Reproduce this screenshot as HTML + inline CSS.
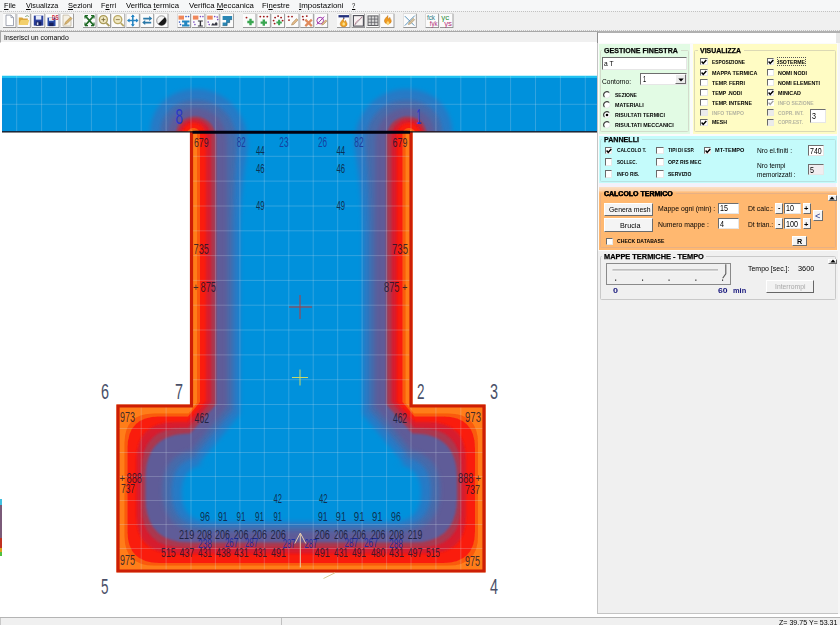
<!DOCTYPE html>
<html lang="it"><head><meta charset="utf-8"><title>Verifica termica</title>
<style>
html,body{margin:0;padding:0;}
body{width:840px;height:625px;overflow:hidden;background:#fff;position:relative;font-family:"Liberation Sans",sans-serif;}
.t{position:absolute;white-space:nowrap;transform-origin:0 50%;display:block;}
.b{position:absolute;box-sizing:border-box;}
svg{position:absolute;left:0;top:0;}
u{text-decoration:underline;}
</style></head><body>
<svg width="840" height="625" viewBox="0 0 840 625">
<defs>
<clipPath id="shp"><path d="M2,76 H597 V131.5 H412.5 V404.5 H485.5 V572.5 H116.5 V404.5 H190 V131.5 H2 Z"/></clipPath>
<filter id="bl0" x="-5%" y="-5%" width="110%" height="110%"><feGaussianBlur stdDeviation="0.7"/></filter>
<filter id="bl1" x="-5%" y="-5%" width="110%" height="110%"><feGaussianBlur stdDeviation="1.3"/></filter>
<filter id="bl2" x="-5%" y="-5%" width="110%" height="110%"><feGaussianBlur stdDeviation="2"/></filter>
</defs>
<g clip-path="url(#shp)">
<rect x="0" y="76" width="597" height="496.5" fill="#ff7d19"/>
<path d="M0,73 L0,134.5 L189.0,134.5 C189.0,128.6 197.0,128.6 197.0,133.6 L197.0,402.7 L188.6,413.5 L154.1,413.5 Q124.5,413.5 124.5,443.1 L124.5,535.9 Q124.5,565.5 154.1,565.5 L448.4,565.5 Q478.0,565.5 478.0,535.9 L478.0,443.1 Q478.0,413.5 448.4,413.5 L413.9,413.5 L405.5,402.7 L405.5,133.6 C405.5,128.6 413.5,128.6 413.5,134.5 L413.5,134.5 L600,134.5 L600,73 Z" fill="#fa5a0a" filter="url(#bl0)"/>
<path d="M0,73 L0,134.5 L187.0,134.5 C187.0,125.7 200.0,125.7 200.0,134.5 L200.0,402.1 L188.0,416.5 L159.2,416.5 Q127.5,416.5 127.5,448.2 L127.5,531.3 Q127.5,563.0 159.2,563.0 L443.3,563.0 Q475.0,563.0 475.0,531.3 L475.0,448.2 Q475.0,416.5 443.3,416.5 L414.5,416.5 L402.5,402.1 L402.5,134.5 C402.5,125.7 415.5,125.7 415.5,134.5 L415.5,134.5 L600,134.5 L600,73 Z" fill="#fa1e10" filter="url(#bl0)"/>
<path d="M0,73 L0,134.5 L182.0,134.5 C182.0,118.5 206.0,118.5 206.0,136.3 L206.0,401.9 L187.6,422.0 L174.5,422.0 Q136.5,422.0 136.5,460.0 L136.5,515.5 Q136.5,553.5 174.5,553.5 L428.0,553.5 Q466.0,553.5 466.0,515.5 L466.0,460.0 Q466.0,422.0 428.0,422.0 L414.9,422.0 L396.5,401.9 L396.5,136.3 C396.5,118.5 420.5,118.5 420.5,134.5 L420.5,134.5 L600,134.5 L600,73 Z" fill="#d71c2d" filter="url(#bl1)"/>
<path d="M0,73 L0,134.5 L179.0,134.5 C179.0,114.1 211.0,114.1 211.0,137.8 L211.0,402.1 L187.9,428.0 L183.0,428.0 Q141.5,428.0 141.5,469.5 L141.5,506.0 Q141.5,547.5 183.0,547.5 L419.5,547.5 Q461.0,547.5 461.0,506.0 L461.0,469.5 Q461.0,428.0 419.5,428.0 L414.6,428.0 L391.5,402.1 L391.5,137.8 C391.5,114.1 423.5,114.1 423.5,134.5 L423.5,134.5 L600,134.5 L600,73 Z" fill="#aa3750" filter="url(#bl1)"/>
<path d="M0,73 L0,134.5 L176.0,134.5 C176.0,109.8 216.0,109.8 216.0,139.3 L216.0,404.5 L190.0,433.5 L189.8,433.5 Q145.5,433.5 145.5,477.8 L145.5,498.2 Q145.5,542.5 189.8,542.5 L412.7,542.5 Q457.0,542.5 457.0,498.2 L457.0,477.8 Q457.0,433.5 412.7,433.5 L412.5,433.5 L386.5,404.5 L386.5,139.3 C386.5,109.8 426.5,109.8 426.5,134.5 L426.5,134.5 L600,134.5 L600,73 Z" fill="#5f5c98" filter="url(#bl1)"/>
<path d="M0,73 L0,134.5 L168.0,134.5 C168.0,98.2 227.0,98.2 227.0,142.6 L227.0,406.8 L191.8,449.5 L203.0,449.5 Q162.5,449.5 162.5,490.0 L162.5,491.0 Q162.5,531.5 203.0,531.5 L399.5,531.5 Q440.0,531.5 440.0,491.0 L440.0,490.0 Q440.0,449.5 399.5,449.5 L410.6,449.5 L375.5,406.8 L375.5,142.6 C375.5,98.2 434.5,98.2 434.5,134.5 L434.5,134.5 L600,134.5 L600,73 Z" fill="#466aaa" filter="url(#bl2)"/>
<path d="M0,73 L0,134.5 L160.0,134.5 C160.0,86.6 237.0,86.6 237.0,144.4 C235.0,171.5 233.0,201.5 233.0,236.5 L233.0,409.7 L194.3,456.5 L206.0,456.5 Q171.5,456.5 171.5,491.0 L171.5,492.0 Q171.5,526.5 206.0,526.5 L396.5,526.5 Q431.0,526.5 431.0,492.0 L431.0,491.0 Q431.0,456.5 396.5,456.5 L408.2,456.5 L369.5,409.7 L369.5,236.5 C369.5,201.5 367.5,171.5 365.5,144.4 C365.5,86.6 442.5,86.6 442.5,134.5 L442.5,134.5 L600,134.5 L600,73 Z" fill="#287ac6" filter="url(#bl2)"/>
<path d="M0,73 L0,134.5 L150.0,134.5 C150.0,72.1 248.0,72.1 248.0,146.5 C244.0,171.5 240.0,201.5 240.0,236.5 L240.0,414.1 L198.0,464.5 L209.5,464.5 Q181.5,464.5 181.5,492.5 L181.5,493.5 Q181.5,521.5 209.5,521.5 L393.0,521.5 Q421.0,521.5 421.0,493.5 L421.0,492.5 Q421.0,464.5 393.0,464.5 L404.5,464.5 L362.5,414.1 L362.5,236.5 C362.5,201.5 358.5,171.5 354.5,146.5 C354.5,72.1 452.5,72.1 452.5,134.5 L452.5,134.5 L600,134.5 L600,73 Z" fill="#0391dc" filter="url(#bl2)"/>
<rect x="0" y="76" width="597" height="2" fill="#25c6f2" opacity="0.9"/>
<path d="M16.7,76 V131.5 M41.6,76 V131.5 M66.5,76 V131.5 M91.4,76 V131.5 M116.3,76 V131.5 M116.3,404.5 V572.5 M141.2,76 V131.5 M141.2,404.5 V572.5 M166.1,76 V131.5 M166.1,404.5 V572.5 M191.0,76 V572.5 M215.4,76 V572.5 M239.9,76 V572.5 M264.3,76 V572.5 M288.8,76 V572.5 M313.2,76 V572.5 M337.7,76 V572.5 M362.1,76 V572.5 M386.6,76 V572.5 M411.0,76 V572.5 M435.9,76 V131.5 M435.9,404.5 V572.5 M460.8,76 V131.5 M460.8,404.5 V572.5 M485.7,76 V131.5 M485.7,404.5 V572.5 M510.6,76 V131.5 M535.5,76 V131.5 M560.4,76 V131.5 M585.3,76 V131.5 M0,104.3 H597 M190,156.3 H412.5 M190,181.1 H412.5 M190,206.0 H412.5 M190,230.8 H412.5 M190,255.6 H412.5 M190,280.4 H412.5 M190,305.2 H412.5 M190,330.0 H412.5 M190,354.9 H412.5 M190,379.7 H412.5 M116.5,404.5 H485.5 M116.5,428.5 H485.5 M116.5,452.5 H485.5 M116.5,476.5 H485.5 M116.5,500.5 H485.5 M116.5,524.5 H485.5 M116.5,548.5 H485.5" stroke="#d4e2ee" stroke-opacity="0.24" stroke-width="1" fill="none"/>
</g>
<rect x="2" y="75" width="595" height="1" fill="#c4f1fb"/>
<path d="M191.5,131.5 V406 H118 V571 H484 V406 H411 V131.5" fill="none" stroke="#cd1e05" stroke-width="3.2" stroke-linejoin="miter"/>
<path d="M2,131.8 H597" stroke="#101018" stroke-width="1.2"/>
<path d="M192.5,132.3 H410" stroke="#000010" stroke-width="3"/>
<path d="M289,307 H312 M300,295 V319" stroke="#b43a3a" stroke-width="1" fill="none"/>
<path d="M292,377.5 H308 M300,369.5 V385.5" stroke="#c8d868" stroke-width="1" fill="none"/>
<path d="M300.3,567.5 V534 M294.8,543.5 L300.3,533 L305.8,543.5" stroke="#e6cdb0" stroke-width="1" fill="none"/>
<path d="M323.5,578.5 L335,572.8" stroke="#d8cc98" stroke-width="1" fill="none"/>
<rect x="0" y="499" width="2" height="57" fill="#7a5a78"/>
<rect x="0" y="499" width="2" height="6" fill="#40c0e0"/><rect x="0" y="538" width="2" height="10" fill="#c03020"/><rect x="0" y="548" width="2" height="4" fill="#e0a020"/><rect x="0" y="552" width="2" height="4" fill="#50c040"/>
<g font-family="Liberation Sans, sans-serif">
<text x="194.0" y="147.3" font-size="13.3" textLength="14.6" lengthAdjust="spacingAndGlyphs" fill="#10142c" fill-opacity="0.8">679</text>
<text x="392.6" y="147.3" font-size="13.3" textLength="14.8" lengthAdjust="spacingAndGlyphs" fill="#10142c" fill-opacity="0.8">679</text>
<text x="236.8" y="147.0" font-size="14.0" textLength="8.9" lengthAdjust="spacingAndGlyphs" fill="#1a2a90" fill-opacity="0.8">82</text>
<text x="279.3" y="147.0" font-size="14.0" textLength="9.3" lengthAdjust="spacingAndGlyphs" fill="#1a2a90" fill-opacity="0.8">23</text>
<text x="317.9" y="147.0" font-size="14.0" textLength="9.1" lengthAdjust="spacingAndGlyphs" fill="#1a2a90" fill-opacity="0.8">26</text>
<text x="354.3" y="147.0" font-size="14.0" textLength="9.3" lengthAdjust="spacingAndGlyphs" fill="#1a2a90" fill-opacity="0.8">82</text>
<text x="256.0" y="154.5" font-size="12.6" textLength="8.6" lengthAdjust="spacingAndGlyphs" fill="#10142c" fill-opacity="0.8">44</text>
<text x="336.4" y="154.5" font-size="12.6" textLength="8.6" lengthAdjust="spacingAndGlyphs" fill="#10142c" fill-opacity="0.8">44</text>
<text x="256.0" y="172.5" font-size="12.6" textLength="8.6" lengthAdjust="spacingAndGlyphs" fill="#10142c" fill-opacity="0.8">46</text>
<text x="336.4" y="172.5" font-size="12.6" textLength="8.6" lengthAdjust="spacingAndGlyphs" fill="#10142c" fill-opacity="0.8">46</text>
<text x="256.0" y="209.5" font-size="12.6" textLength="8.6" lengthAdjust="spacingAndGlyphs" fill="#10142c" fill-opacity="0.8">49</text>
<text x="336.4" y="209.5" font-size="12.6" textLength="8.6" lengthAdjust="spacingAndGlyphs" fill="#10142c" fill-opacity="0.8">49</text>
<text x="193.6" y="254.0" font-size="14.0" textLength="15.4" lengthAdjust="spacingAndGlyphs" fill="#10142c" fill-opacity="0.8">735</text>
<text x="392.0" y="254.0" font-size="14.0" textLength="16.0" lengthAdjust="spacingAndGlyphs" fill="#10142c" fill-opacity="0.8">735</text>
<text x="193.0" y="290.6" font-size="11.2" textLength="5.5" lengthAdjust="spacingAndGlyphs" fill="#10142c" fill-opacity="0.8">+</text>
<text x="200.5" y="291.6" font-size="14.0" textLength="15.5" lengthAdjust="spacingAndGlyphs" fill="#10142c" fill-opacity="0.8">875</text>
<text x="384.0" y="291.6" font-size="14.0" textLength="15.5" lengthAdjust="spacingAndGlyphs" fill="#10142c" fill-opacity="0.8">875</text>
<text x="402.0" y="290.6" font-size="11.2" textLength="5.5" lengthAdjust="spacingAndGlyphs" fill="#10142c" fill-opacity="0.8">+</text>
<text x="194.6" y="422.5" font-size="14.0" textLength="14.4" lengthAdjust="spacingAndGlyphs" fill="#10142c" fill-opacity="0.8">462</text>
<text x="393.0" y="422.5" font-size="14.0" textLength="14.0" lengthAdjust="spacingAndGlyphs" fill="#10142c" fill-opacity="0.8">462</text>
<text x="120.0" y="422.0" font-size="14.0" textLength="15.0" lengthAdjust="spacingAndGlyphs" fill="#10142c" fill-opacity="0.8">973</text>
<text x="465.0" y="422.0" font-size="14.0" textLength="16.0" lengthAdjust="spacingAndGlyphs" fill="#10142c" fill-opacity="0.8">973</text>
<text x="119.5" y="482.0" font-size="11.2" textLength="5.5" lengthAdjust="spacingAndGlyphs" fill="#10142c" fill-opacity="0.8">+</text>
<text x="126.5" y="483.0" font-size="14.0" textLength="15.5" lengthAdjust="spacingAndGlyphs" fill="#10142c" fill-opacity="0.8">888</text>
<text x="458.0" y="483.0" font-size="14.0" textLength="15.5" lengthAdjust="spacingAndGlyphs" fill="#10142c" fill-opacity="0.8">888</text>
<text x="475.5" y="482.0" font-size="11.2" textLength="5.5" lengthAdjust="spacingAndGlyphs" fill="#10142c" fill-opacity="0.8">+</text>
<text x="121.0" y="492.5" font-size="12.6" textLength="14.0" lengthAdjust="spacingAndGlyphs" fill="#10142c" fill-opacity="0.8">737</text>
<text x="465.0" y="493.5" font-size="12.6" textLength="15.0" lengthAdjust="spacingAndGlyphs" fill="#10142c" fill-opacity="0.8">737</text>
<text x="273.6" y="502.5" font-size="12.6" textLength="8.4" lengthAdjust="spacingAndGlyphs" fill="#10142c" fill-opacity="0.8">42</text>
<text x="319.0" y="502.5" font-size="12.6" textLength="8.7" lengthAdjust="spacingAndGlyphs" fill="#10142c" fill-opacity="0.8">42</text>
<text x="200.0" y="520.5" font-size="12.6" textLength="10.0" lengthAdjust="spacingAndGlyphs" fill="#10142c" fill-opacity="0.8">96</text>
<text x="218.0" y="520.5" font-size="12.6" textLength="9.7" lengthAdjust="spacingAndGlyphs" fill="#10142c" fill-opacity="0.8">91</text>
<text x="236.6" y="520.5" font-size="12.6" textLength="8.9" lengthAdjust="spacingAndGlyphs" fill="#10142c" fill-opacity="0.8">91</text>
<text x="255.0" y="520.5" font-size="12.6" textLength="9.0" lengthAdjust="spacingAndGlyphs" fill="#10142c" fill-opacity="0.8">91</text>
<text x="273.6" y="520.5" font-size="12.6" textLength="8.4" lengthAdjust="spacingAndGlyphs" fill="#10142c" fill-opacity="0.8">91</text>
<text x="318.0" y="520.5" font-size="12.6" textLength="9.7" lengthAdjust="spacingAndGlyphs" fill="#10142c" fill-opacity="0.8">91</text>
<text x="335.8" y="520.5" font-size="12.6" textLength="10.2" lengthAdjust="spacingAndGlyphs" fill="#10142c" fill-opacity="0.8">91</text>
<text x="353.8" y="520.5" font-size="12.6" textLength="10.8" lengthAdjust="spacingAndGlyphs" fill="#10142c" fill-opacity="0.8">91</text>
<text x="372.0" y="520.5" font-size="12.6" textLength="10.7" lengthAdjust="spacingAndGlyphs" fill="#10142c" fill-opacity="0.8">91</text>
<text x="391.0" y="520.5" font-size="12.6" textLength="9.8" lengthAdjust="spacingAndGlyphs" fill="#10142c" fill-opacity="0.8">96</text>
<text x="179.0" y="538.5" font-size="12.6" textLength="15.3" lengthAdjust="spacingAndGlyphs" fill="#10142c" fill-opacity="0.8">219</text>
<text x="197.0" y="538.5" font-size="12.6" textLength="15.0" lengthAdjust="spacingAndGlyphs" fill="#10142c" fill-opacity="0.8">208</text>
<text x="215.0" y="538.5" font-size="12.6" textLength="15.0" lengthAdjust="spacingAndGlyphs" fill="#10142c" fill-opacity="0.8">206</text>
<text x="233.7" y="538.5" font-size="12.6" textLength="14.8" lengthAdjust="spacingAndGlyphs" fill="#10142c" fill-opacity="0.8">206</text>
<text x="252.0" y="538.5" font-size="12.6" textLength="15.0" lengthAdjust="spacingAndGlyphs" fill="#10142c" fill-opacity="0.8">206</text>
<text x="270.6" y="538.5" font-size="12.6" textLength="15.4" lengthAdjust="spacingAndGlyphs" fill="#10142c" fill-opacity="0.8">206</text>
<text x="314.6" y="538.5" font-size="12.6" textLength="15.4" lengthAdjust="spacingAndGlyphs" fill="#10142c" fill-opacity="0.8">206</text>
<text x="334.0" y="538.5" font-size="12.6" textLength="14.0" lengthAdjust="spacingAndGlyphs" fill="#10142c" fill-opacity="0.8">206</text>
<text x="352.0" y="538.5" font-size="12.6" textLength="14.0" lengthAdjust="spacingAndGlyphs" fill="#10142c" fill-opacity="0.8">206</text>
<text x="371.0" y="538.5" font-size="12.6" textLength="14.4" lengthAdjust="spacingAndGlyphs" fill="#10142c" fill-opacity="0.8">206</text>
<text x="389.0" y="538.5" font-size="12.6" textLength="15.0" lengthAdjust="spacingAndGlyphs" fill="#10142c" fill-opacity="0.8">208</text>
<text x="407.7" y="538.5" font-size="12.6" textLength="14.6" lengthAdjust="spacingAndGlyphs" fill="#10142c" fill-opacity="0.8">219</text>
<text x="161.0" y="557.0" font-size="12.6" textLength="14.7" lengthAdjust="spacingAndGlyphs" fill="#10142c" fill-opacity="0.8">515</text>
<text x="179.5" y="557.0" font-size="12.6" textLength="14.8" lengthAdjust="spacingAndGlyphs" fill="#10142c" fill-opacity="0.8">437</text>
<text x="198.0" y="557.0" font-size="12.6" textLength="14.0" lengthAdjust="spacingAndGlyphs" fill="#10142c" fill-opacity="0.8">431</text>
<text x="216.0" y="557.0" font-size="12.6" textLength="14.7" lengthAdjust="spacingAndGlyphs" fill="#10142c" fill-opacity="0.8">438</text>
<text x="234.0" y="557.0" font-size="12.6" textLength="14.5" lengthAdjust="spacingAndGlyphs" fill="#10142c" fill-opacity="0.8">431</text>
<text x="253.0" y="557.0" font-size="12.6" textLength="14.0" lengthAdjust="spacingAndGlyphs" fill="#10142c" fill-opacity="0.8">431</text>
<text x="271.0" y="557.0" font-size="12.6" textLength="15.0" lengthAdjust="spacingAndGlyphs" fill="#10142c" fill-opacity="0.8">491</text>
<text x="314.6" y="557.0" font-size="12.6" textLength="15.4" lengthAdjust="spacingAndGlyphs" fill="#10142c" fill-opacity="0.8">491</text>
<text x="334.0" y="557.0" font-size="12.6" textLength="14.0" lengthAdjust="spacingAndGlyphs" fill="#10142c" fill-opacity="0.8">431</text>
<text x="352.0" y="557.0" font-size="12.6" textLength="14.0" lengthAdjust="spacingAndGlyphs" fill="#10142c" fill-opacity="0.8">491</text>
<text x="371.0" y="557.0" font-size="12.6" textLength="14.4" lengthAdjust="spacingAndGlyphs" fill="#10142c" fill-opacity="0.8">480</text>
<text x="389.0" y="557.0" font-size="12.6" textLength="15.0" lengthAdjust="spacingAndGlyphs" fill="#10142c" fill-opacity="0.8">431</text>
<text x="407.7" y="557.0" font-size="12.6" textLength="14.6" lengthAdjust="spacingAndGlyphs" fill="#10142c" fill-opacity="0.8">497</text>
<text x="426.0" y="557.0" font-size="12.6" textLength="14.0" lengthAdjust="spacingAndGlyphs" fill="#10142c" fill-opacity="0.8">515</text>
<text x="198.0" y="547.8" font-size="11.9" textLength="14.0" lengthAdjust="spacingAndGlyphs" fill="#1828a0" fill-opacity="0.9">238</text>
<text x="225.0" y="547.2" font-size="11.9" textLength="13.0" lengthAdjust="spacingAndGlyphs" fill="#1828a0" fill-opacity="0.9">267</text>
<text x="245.0" y="547.2" font-size="11.9" textLength="13.0" lengthAdjust="spacingAndGlyphs" fill="#1828a0" fill-opacity="0.9">287</text>
<text x="282.7" y="547.8" font-size="11.9" textLength="12.6" lengthAdjust="spacingAndGlyphs" fill="#1828a0" fill-opacity="0.9">287</text>
<text x="304.6" y="547.8" font-size="11.9" textLength="12.6" lengthAdjust="spacingAndGlyphs" fill="#1828a0" fill-opacity="0.9">287</text>
<text x="344.5" y="547.2" font-size="11.9" textLength="13.5" lengthAdjust="spacingAndGlyphs" fill="#1828a0" fill-opacity="0.9">287</text>
<text x="364.0" y="547.2" font-size="11.9" textLength="13.8" lengthAdjust="spacingAndGlyphs" fill="#1828a0" fill-opacity="0.9">267</text>
<text x="389.0" y="547.8" font-size="11.9" textLength="14.0" lengthAdjust="spacingAndGlyphs" fill="#1828a0" fill-opacity="0.9">288</text>
<text x="120.0" y="565.0" font-size="14.0" textLength="15.0" lengthAdjust="spacingAndGlyphs" fill="#10142c" fill-opacity="0.8">975</text>
<text x="465.0" y="566.0" font-size="14.0" textLength="15.0" lengthAdjust="spacingAndGlyphs" fill="#10142c" fill-opacity="0.8">975</text>
<text x="175.5" y="124.4" font-size="22.9" textLength="7.5" lengthAdjust="spacingAndGlyphs" fill="#2a36c8" >8</text>
<text x="416.5" y="124.4" font-size="22.9" textLength="5.0" lengthAdjust="spacingAndGlyphs" fill="#2a36c8" >1</text>
<text x="101.0" y="398.5" font-size="21.6" textLength="8.0" lengthAdjust="spacingAndGlyphs" fill="#4a5068" >6</text>
<text x="175.0" y="398.5" font-size="21.6" textLength="8.0" lengthAdjust="spacingAndGlyphs" fill="#4a5068" >7</text>
<text x="417.0" y="398.5" font-size="21.6" textLength="7.5" lengthAdjust="spacingAndGlyphs" fill="#4a5068" >2</text>
<text x="490.0" y="398.5" font-size="21.6" textLength="8.0" lengthAdjust="spacingAndGlyphs" fill="#4a5068" >3</text>
<text x="101.0" y="594.0" font-size="22.3" textLength="7.5" lengthAdjust="spacingAndGlyphs" fill="#4a5068" >5</text>
<text x="490.0" y="594.0" font-size="22.3" textLength="8.0" lengthAdjust="spacingAndGlyphs" fill="#4a5068" >4</text>
</g>
</svg>
<div class="b" style="left:0.00px;top:0.00px;width:840.00px;height:11.00px;background:#f6f7f8;"></div>
<div class="b" style="left:0.00px;top:11.00px;width:840.00px;height:19.50px;background:#f0f0f0;border-top:1px dotted #c2c2c2;border-bottom:1px dotted #c2c2c2;"></div>
<div class="b" style="left:0.00px;top:30.50px;width:597.00px;height:12.50px;background:#f0f0f0;border-top:1px solid #a8a8a8;border-left:1px solid #a8a8a8;border-bottom:1px solid #fff;"></div>
<div class="b" style="left:597.00px;top:30.50px;width:239.00px;height:12.50px;background:#fff;border-top:2px solid #b0b0b0;border-left:1px solid #909090;"></div>
<div class="b" style="left:836.00px;top:30.50px;width:4.00px;height:12.50px;background:#e8e8e8;border-top:2px solid #b0b0b0;"></div>
<span class="t" style="left:4.40px;top:0px;font-size:7.6px;line-height:12px;color:#000;transform:scaleX(0.9717);"><u>F</u>ile</span>
<span class="t" style="left:25.60px;top:0px;font-size:7.6px;line-height:12px;color:#000;transform:scaleX(0.9507);"><u>V</u>isualizza</span>
<span class="t" style="left:67.50px;top:0px;font-size:7.6px;line-height:12px;color:#000;transform:scaleX(0.9829);"><u>S</u>ezioni</span>
<span class="t" style="left:101.00px;top:0px;font-size:7.6px;line-height:12px;color:#000;transform:scaleX(0.9603);">F<u>e</u>rri</span>
<span class="t" style="left:125.70px;top:0px;font-size:7.6px;line-height:12px;color:#000;transform:scaleX(1.0202);">Verifica <u>t</u>ermica</span>
<span class="t" style="left:188.50px;top:0px;font-size:7.6px;line-height:12px;color:#000;transform:scaleX(1.0258);">Verifica <u>M</u>eccanica</span>
<span class="t" style="left:262.00px;top:0px;font-size:7.6px;line-height:12px;color:#000;transform:scaleX(1.0126);">Fi<u>n</u>estre</span>
<span class="t" style="left:298.50px;top:0px;font-size:7.6px;line-height:12px;color:#000;transform:scaleX(1.0430);"><u>I</u>mpostazioni</span>
<span class="t" style="left:352.30px;top:0px;font-size:7.6px;line-height:12px;color:#000;transform:scaleX(0.7807);"><u>?</u></span>
<span class="t" style="left:4.20px;top:32px;font-size:7.70px;line-height:12px;color:#000;transform:scaleX(0.8906);">Inserisci un comando</span>
<div class="b" style="left:0.00px;top:616.50px;width:840.00px;height:8.50px;background:#f0f0f0;border-top:1px solid #b4b4b4;"></div>
<div class="b" style="left:0.00px;top:617.50px;width:282.00px;height:7.50px;border-left:1px solid #c8c8c8;border-right:1px solid #c0c0c0;"></div>
<span class="t" style="left:779.00px;top:617px;font-size:7.60px;line-height:12px;color:#000;transform:scaleX(0.9312);">Z= 39.75 Y= 53.31</span>
<svg width="840" height="32" viewBox="0 0 840 32">
<g transform="translate(3,13.6)">
<rect x="0" y="0" width="13.4" height="14.4" fill="#8a8a8a"/><rect x="0" y="0" width="12.6" height="13.5" fill="#fbfbfb"/>
<path d="M3,1.5 H8 L10.5,4 V12 H3 Z" fill="#fff" stroke="#8a8fa0" stroke-width="0.8"/><path d="M8,1.5 V4 H10.5" fill="none" stroke="#8a8fa0" stroke-width="0.7"/>
</g>
<g transform="translate(17.3,13.6)">
<rect x="0" y="0" width="13.4" height="14.4" fill="#8a8a8a"/><rect x="0" y="0" width="12.6" height="13.5" fill="#fbfbfb"/>
<path d="M1.5,4 H5 L6,5 H10.5 V11.5 H1.5 Z" fill="#d9a63c"/><path d="M1.5,11.5 L3.5,6.5 H12 L10.5,11.5 Z" fill="#f3cf6a"/><path d="M8,3 q2,-2 3.5,0" stroke="#4a7a4a" stroke-width="0.7" fill="none"/>
</g>
<g transform="translate(31.8,13.6)">
<rect x="0" y="0" width="13.4" height="14.4" fill="#8a8a8a"/><rect x="0" y="0" width="12.6" height="13.5" fill="#fbfbfb"/>
<rect x="2" y="2" width="9.5" height="10" fill="#2a3f9c"/><rect x="4" y="2" width="5.5" height="4" fill="#e8ecf8"/><rect x="4" y="8" width="5.5" height="4" fill="#16205c"/><rect x="5" y="8.8" width="1.6" height="2.6" fill="#d0d6f0"/>
</g>
<g transform="translate(46,13.6)">
<rect x="0" y="0" width="13.4" height="14.4" fill="#8a8a8a"/><rect x="0" y="0" width="12.6" height="13.5" fill="#fbfbfb"/>
<rect x="1.5" y="4" width="8" height="8.5" fill="#2a4aa6"/><rect x="3" y="4" width="4.6" height="3.2" fill="#e8ecf8"/><rect x="3.2" y="9" width="4.4" height="3.5" fill="#16205c"/><text x="6" y="6.2" font-size="6.5" font-weight="bold" fill="#c8283c" font-family="Liberation Sans, sans-serif" textLength="6.5" lengthAdjust="spacingAndGlyphs">DS</text>
</g>
<g transform="translate(60.5,13.6)">
<rect x="0" y="0" width="13.4" height="14.4" fill="#8a8a8a"/><rect x="0" y="0" width="12.6" height="13.5" fill="#fbfbfb"/>
<path d="M2.5,1.5 H8 L10.5,4 V12.5 H2.5 Z" fill="#f6f1e4" stroke="#b7ad98" stroke-width="0.7"/><path d="M4,11 L5,8.5 L10,3.5 L11.5,5 L6.5,10 Z" fill="#d9b26a" stroke="#a08048" stroke-width="0.5"/>
</g>
<g transform="translate(83,13.6)">
<rect x="0" y="0" width="13.4" height="14.4" fill="#8a8a8a"/><rect x="0" y="0" width="12.6" height="13.5" fill="#fbfbfb"/>
<path d="M2,2 L11,12 M11,2 L2,12" stroke="#1f6a26" stroke-width="1.6"/><path d="M2,2 h3 M2,2 v3 M11,2 h-3 M11,2 v3 M2,12 h3 M2,12 v-3 M11,12 h-3 M11,12 v-3" stroke="#1f6a26" stroke-width="1.1"/>
</g>
<g transform="translate(97.4,13.6)">
<rect x="0" y="0" width="13.4" height="14.4" fill="#8a8a8a"/><rect x="0" y="0" width="12.6" height="13.5" fill="#fbfbfb"/>
<circle cx="6" cy="6" r="4" fill="#f1e9c3" stroke="#a99a58" stroke-width="1.3"/><path d="M9,9.5 L12,12.5" stroke="#a99a58" stroke-width="1.8"/><path d="M4,6 H8 M6,4 V8" stroke="#7c6e3a" stroke-width="0.9"/>
</g>
<g transform="translate(111.8,13.6)">
<rect x="0" y="0" width="13.4" height="14.4" fill="#8a8a8a"/><rect x="0" y="0" width="12.6" height="13.5" fill="#fbfbfb"/>
<circle cx="6" cy="6" r="4" fill="#f1e9c3" stroke="#b9a866" stroke-width="1.3"/><path d="M9,9.5 L12,12.5" stroke="#b9a866" stroke-width="1.8"/><path d="M4,6 H8" stroke="#8c7e4a" stroke-width="0.9"/>
</g>
<g transform="translate(126.3,13.6)">
<rect x="0" y="0" width="13.4" height="14.4" fill="#8a8a8a"/><rect x="0" y="0" width="12.6" height="13.5" fill="#fbfbfb"/>
<path d="M6.5,1.5 V12.5 M1.5,7 H11.5" stroke="#2484c2" stroke-width="1.5"/><path d="M6.5,0.8 L4.5,3.3 H8.5 Z M6.5,13.2 L4.5,10.7 H8.5 Z M0.8,7 L3.3,5 V9 Z M12.2,7 L9.7,5 V9 Z" fill="#2484c2"/>
</g>
<g transform="translate(140.7,13.6)">
<rect x="0" y="0" width="13.4" height="14.4" fill="#8a8a8a"/><rect x="0" y="0" width="12.6" height="13.5" fill="#fbfbfb"/>
<path d="M2.5,5 H9 M10.5,9 H4" stroke="#2a78a8" stroke-width="1.6"/><path d="M8.5,2.5 L11.5,5 L8.5,7.5 Z M4.5,6.5 L1.5,9 L4.5,11.5 Z" fill="#2a78a8"/>
</g>
<g transform="translate(155,13.6)">
<rect x="0" y="0" width="13.4" height="14.4" fill="#8a8a8a"/><rect x="0" y="0" width="12.6" height="13.5" fill="#fbfbfb"/>
<circle cx="6.5" cy="7" r="4.8" fill="#f4f4f4" stroke="#707070" stroke-width="0.7"/><path d="M9.9,3.6 A4.8,4.8 0 0 1 3.1,10.4 Z" fill="#181818"/>
</g>
<g transform="translate(177.5,13.6)">
<rect x="0" y="0" width="13.4" height="14.4" fill="#8a8a8a"/><rect x="0" y="0" width="12.6" height="13.5" fill="#fbfbfb"/>
<rect x="1" y="2" width="5.5" height="4" fill="#f0875a"/><circle cx="8.5" cy="3" r="0.8" fill="#3a5ac0"/><circle cx="11" cy="3" r="0.8" fill="#3a5ac0"/><circle cx="2" cy="8.5" r="0.8" fill="#3a5ac0"/><circle cx="3" cy="11" r="0.8" fill="#3a5ac0"/><path d="M4.5,7 H12 V9 H9.8 V11 H12 V13 H4.5 V11 H6.7 V9 H4.5 Z" fill="#2286c0"/>
</g>
<g transform="translate(191.9,13.6)">
<rect x="0" y="0" width="13.4" height="14.4" fill="#8a8a8a"/><rect x="0" y="0" width="12.6" height="13.5" fill="#fbfbfb"/>
<rect x="1" y="2" width="5.5" height="4" fill="#f0875a"/><circle cx="8.5" cy="3" r="0.8" fill="#7a4ac0"/><circle cx="11" cy="3" r="0.8" fill="#7a4ac0"/><circle cx="2" cy="8.5" r="0.8" fill="#7a4ac0"/><circle cx="3" cy="11" r="0.8" fill="#7a4ac0"/><path d="M6,7 H11 V8 H9.2 V12 H11 V13 H6 V12 H7.8 V8 H6 Z" fill="#303038"/>
</g>
<g transform="translate(206.2,13.6)">
<rect x="0" y="0" width="13.4" height="14.4" fill="#8a8a8a"/><rect x="0" y="0" width="12.6" height="13.5" fill="#fbfbfb"/>
<rect x="1" y="2" width="5.5" height="4" fill="#f0875a"/><circle cx="8.5" cy="3" r="0.8" fill="#7a4ac0"/><circle cx="11" cy="3.5" r="0.8" fill="#7a4ac0"/><circle cx="2" cy="8.5" r="0.8" fill="#7a4ac0"/><circle cx="3" cy="11" r="0.8" fill="#7a4ac0"/><circle cx="11.5" cy="6" r="0.8" fill="#7a4ac0"/><path d="M5,12 q1.5,-4.5 3,-1 q1.5,-4 3.2,-1.5 v2.5 Z" fill="#383844"/>
</g>
<g transform="translate(220.6,13.6)">
<rect x="0" y="0" width="13.4" height="14.4" fill="#8a8a8a"/><rect x="0" y="0" width="12.6" height="13.5" fill="#fbfbfb"/>
<path d="M2,2.5 H11.5 V6 H9 V9 H6.5 V12 H2 V9 H5.5 V6.5 H2 Z" fill="#2a86b4"/><path d="M2,12 H6.5 V9 H9 V6 H11.5" stroke="#175a80" stroke-width="0.7" fill="none"/>
</g>
<g transform="translate(243,13.6)">
<rect x="0" y="0" width="13.4" height="14.4" fill="#8a8a8a"/><rect x="0" y="0" width="12.6" height="13.5" fill="#fbfbfb"/>
<circle cx="3.5" cy="4" r="0.95" fill="#9c1a1a"/><path d="M6.3,5.2 h2.4 v2 h2 v2.4 h-2 v2 h-2.4 v-2 h-2 v-2.4 h2 Z" fill="#3aa651"/>
</g>
<g transform="translate(257.3,13.6)">
<rect x="0" y="0" width="13.4" height="14.4" fill="#8a8a8a"/><rect x="0" y="0" width="12.6" height="13.5" fill="#fbfbfb"/>
<circle cx="3" cy="3" r="0.95" fill="#9c1a1a"/><circle cx="6.5" cy="3" r="0.95" fill="#9c1a1a"/><circle cx="10" cy="3" r="0.95" fill="#9c1a1a"/><path d="M5.3,5.8 h2.4 v2 h2 v2.4 h-2 v2 h-2.4 v-2 h-2 v-2.4 h2 Z" fill="#3aa651"/>
</g>
<g transform="translate(271.6,13.6)">
<rect x="0" y="0" width="13.4" height="14.4" fill="#8a8a8a"/><rect x="0" y="0" width="12.6" height="13.5" fill="#fbfbfb"/>
<circle cx="2" cy="7" r="0.95" fill="#9c1a1a"/><circle cx="3.5" cy="4" r="0.95" fill="#9c1a1a"/><circle cx="6.5" cy="2.5" r="0.95" fill="#9c1a1a"/><circle cx="9.5" cy="4" r="0.95" fill="#9c1a1a"/><circle cx="11" cy="7" r="0.95" fill="#9c1a1a"/><circle cx="3" cy="10" r="0.95" fill="#9c1a1a"/><path d="M6.5,6.2 h2 v1.7 h1.7 v2 h-1.7 v1.7 h-2 v-1.7 h-1.7 v-2 h1.7 Z" fill="#3aa651"/>
</g>
<g transform="translate(286,13.6)">
<rect x="0" y="0" width="13.4" height="14.4" fill="#8a8a8a"/><rect x="0" y="0" width="12.6" height="13.5" fill="#fbfbfb"/>
<circle cx="2.5" cy="3" r="0.95" fill="#9c1a1a"/><circle cx="6" cy="3" r="0.95" fill="#9c1a1a"/><circle cx="3" cy="6.5" r="0.95" fill="#9c1a1a"/><path d="M5.5,11.5 L6.3,9.3 L10.5,5 L12,6.5 L7.7,10.8 Z" fill="#e2b988" stroke="#a07a48" stroke-width="0.5"/>
</g>
<g transform="translate(300.3,13.6)">
<rect x="0" y="0" width="13.4" height="14.4" fill="#8a8a8a"/><rect x="0" y="0" width="12.6" height="13.5" fill="#fbfbfb"/>
<circle cx="2.5" cy="3" r="0.95" fill="#9c1a1a"/><circle cx="6.5" cy="2.5" r="0.95" fill="#9c1a1a"/><circle cx="3" cy="6" r="0.95" fill="#9c1a1a"/><path d="M5,6 L11.5,12.5 M11.5,6 L5,12.5" stroke="#e08a5c" stroke-width="2.2"/>
</g>
<g transform="translate(314.7,13.6)">
<rect x="0" y="0" width="13.4" height="14.4" fill="#8a8a8a"/><rect x="0" y="0" width="12.6" height="13.5" fill="#fbfbfb"/>
<circle cx="5.5" cy="7" r="3.3" fill="none" stroke="#a23cae" stroke-width="1"/><path d="M2,11 L9.5,3" stroke="#a23cae" stroke-width="1"/><path d="M7,11.5 L7.6,9.7 L11,6.3 L12.2,7.5 L8.8,10.9 Z" fill="#e2b988" stroke="#a07a48" stroke-width="0.5"/>
</g>
<g transform="translate(337,13.6)">
<rect x="0" y="0" width="13.4" height="14.4" fill="#8a8a8a"/><rect x="0" y="0" width="12.6" height="13.5" fill="#fbfbfb"/>
<rect x="1.5" y="1.5" width="10.5" height="2.3" fill="#23307c"/><rect x="6" y="3.8" width="1.4" height="1.4" fill="#23307c"/><path d="M6.8,5 c-3,2.8 -4.2,4.6 -3.2,6.8 c0.8,1.7 5.4,1.7 6.2,0 c1,-2.4 -1,-3.6 -1.2,-5 c-0.8,0.6 -1,1.2 -1,2 c-1,-1.2 -1.2,-2.4 -0.8,-3.8 Z" fill="#f0a322" stroke="#b86a10" stroke-width="0.5"/><ellipse cx="6.7" cy="10.3" rx="1.3" ry="1.6" fill="#fbe08a"/>
</g>
<g transform="translate(351.6,13.6)">
<rect x="0" y="0" width="13.4" height="14.4" fill="#8a8a8a"/><rect x="0" y="0" width="12.6" height="13.5" fill="#fbfbfb"/>
<rect x="1.8" y="2" width="10" height="10.5" fill="#f7f2f2" stroke="#4c4c54" stroke-width="1.1"/><path d="M3.5,11 C5,6 7,8 10.5,3" stroke="#c88aa0" stroke-width="1" fill="none"/><path d="M3,11.5 L10.8,3.2" stroke="#6a6a72" stroke-width="0.5"/>
</g>
<g transform="translate(366.2,13.6)">
<rect x="0" y="0" width="13.4" height="14.4" fill="#8a8a8a"/><rect x="0" y="0" width="12.6" height="13.5" fill="#fbfbfb"/>
<rect x="1.8" y="2.3" width="10" height="9.6" fill="#d8d8d8" stroke="#606064" stroke-width="1"/><path d="M1.8,5.5 H11.8 M1.8,8.7 H11.8 M5.1,2.3 V11.9 M8.5,2.3 V11.9" stroke="#606064" stroke-width="0.8"/>
</g>
<g transform="translate(381,13.6)">
<rect x="0" y="0" width="13.4" height="14.4" fill="#8a8a8a"/><rect x="0" y="0" width="12.6" height="13.5" fill="#fbfbfb"/>
<path d="M7,2 c-3,2.8 -4.2,4.6 -3.2,6.8 c0.8,1.7 5.4,1.7 6.2,0 c1,-2.4 -1,-3.6 -1.2,-5 c-0.8,0.6 -1,1.2 -1,2 c-1,-1.2 -1.2,-2.4 -0.8,-3.8 Z" fill="#f09a1e" stroke="#b86a10" stroke-width="0.5"/><ellipse cx="6.9" cy="9.6" rx="1.4" ry="2" fill="#fbd67a"/>
</g>
<g transform="translate(403.3,13.6)">
<rect x="0" y="0" width="13.4" height="14.4" fill="#8a8a8a"/><rect x="0" y="0" width="12.6" height="13.5" fill="#fbfbfb"/>
<path d="M1.5,2.5 L11,12 M1.5,12 L11.5,2" stroke="#4a88b4" stroke-width="0.9"/><path d="M5,11 L5.7,9 L10,4.7 L11.4,6.1 L7.1,10.4 Z" fill="#d8c4a0" stroke="#9a8258" stroke-width="0.5"/>
</g>
<g transform="translate(425.6,13.6)">
<rect x="0" y="0" width="13.4" height="14.4" fill="#8a8a8a"/><rect x="0" y="0" width="12.6" height="13.5" fill="#fbfbfb"/>
<text x="1.3" y="6.6" font-size="6.6" fill="#1e7a80" font-family="Liberation Sans, sans-serif" textLength="8" lengthAdjust="spacingAndGlyphs">fck</text><text x="4.2" y="12.4" font-size="6.6" fill="#b42a78" font-family="Liberation Sans, sans-serif" textLength="7.8" lengthAdjust="spacingAndGlyphs">fyk</text>
</g>
<g transform="translate(440,13.6)">
<rect x="0" y="0" width="13.4" height="14.4" fill="#8a8a8a"/><rect x="0" y="0" width="12.6" height="13.5" fill="#fbfbfb"/>
<text x="1.3" y="6.6" font-size="6.6" fill="#2a8a3a" font-family="Liberation Sans, sans-serif" textLength="8" lengthAdjust="spacingAndGlyphs">γc</text><text x="4.2" y="12.4" font-size="6.6" fill="#b42a78" font-family="Liberation Sans, sans-serif" textLength="7.8" lengthAdjust="spacingAndGlyphs">γs</text>
</g>
</svg>
<div class="b" style="left:597.00px;top:43.00px;width:243.00px;height:571.00px;background:#f0f0f0;border-left:1px solid #c4c4c4;border-bottom:1px solid #c4c4c4;"></div>
<div class="b" style="left:598.00px;top:43.00px;width:242.00px;height:207.50px;background:#fbfbfb;"></div>
<div class="b" style="left:837.50px;top:43.00px;width:2.50px;height:571.00px;background:#f6f6f6;"></div>
<div class="b" style="left:598.50px;top:43.50px;width:91.50px;height:90.00px;background:#e2fbe4;"></div>
<div class="b" style="left:600.00px;top:49.50px;width:88.50px;height:82.80px;border:1px solid #d2dccb;border-radius:1.5px;"></div>
<div class="b" style="left:602.00px;top:46.00px;width:78.50px;height:8.00px;background:#e2fbe4;"></div>
<span class="t" style="left:604.00px;top:45px;font-size:7.20px;line-height:12px;font-weight:bold;color:#000;transform:scaleX(0.9839);-webkit-text-stroke:0.25px #000;">GESTIONE FINESTRA</span>
<div class="b" style="left:602.00px;top:57.00px;width:85.00px;height:12.50px;background:#fff;border-top:1px solid #6e6e6e;border-left:1px solid #6e6e6e;border-bottom:1px solid #e6e6e6;border-right:1px solid #e6e6e6;"></div>
<span class="t" style="left:604.00px;top:58px;font-size:8.00px;line-height:12px;color:#000;transform:scaleX(0.8323);">a T</span>
<span class="t" style="left:602.00px;top:76px;font-size:7.60px;line-height:12px;color:#000;transform:scaleX(0.8689);">Contorno:</span>
<div class="b" style="left:640.00px;top:73.00px;width:47.00px;height:12.00px;background:#fff;border-top:1px solid #6e6e6e;border-left:1px solid #6e6e6e;border-bottom:1px solid #e6e6e6;border-right:1px solid #e6e6e6;"></div>
<span class="t" style="left:643.30px;top:73px;font-size:8.40px;line-height:12px;color:#000;transform:scaleX(0.6635);">1</span>
<div class="b" style="left:675.00px;top:74.30px;width:11.00px;height:9.90px;background:#ececec;border-top:1px solid #fff;border-left:1px solid #fff;border-bottom:1px solid #6c6c6c;border-right:1px solid #6c6c6c;"></div>
<svg style="left:677.5px;top:77.5px" width="6" height="4" viewBox="0 0 6 4"><path d="M0.3,0.4 H5.7 L3,3.6 Z" fill="#000"/></svg>
<svg style="left:603.00px;top:91.00px" width="8" height="8" viewBox="0 0 8 8"><circle cx="4" cy="4" r="3" fill="#fff"/><path d="M1.6,6 A3.1,3.1 0 0 1 6.2,1.7" stroke="#4a4a4a" stroke-width="1.2" fill="none"/><path d="M6.2,1.7 A3.1,3.1 0 0 1 1.6,6" stroke="#e4e4e4" stroke-width="0.8" fill="none"/></svg>
<span class="t" style="left:615.00px;top:89px;font-size:5.70px;line-height:12px;font-weight:bold;color:#000;transform:scaleX(0.8792);">SEZIONE</span>
<svg style="left:603.00px;top:101.00px" width="8" height="8" viewBox="0 0 8 8"><circle cx="4" cy="4" r="3" fill="#fff"/><path d="M1.6,6 A3.1,3.1 0 0 1 6.2,1.7" stroke="#4a4a4a" stroke-width="1.2" fill="none"/><path d="M6.2,1.7 A3.1,3.1 0 0 1 1.6,6" stroke="#e4e4e4" stroke-width="0.8" fill="none"/></svg>
<span class="t" style="left:615.00px;top:99px;font-size:5.70px;line-height:12px;font-weight:bold;color:#000;transform:scaleX(0.9409);">MATERIALI</span>
<svg style="left:603.00px;top:111.00px" width="8" height="8" viewBox="0 0 8 8"><circle cx="4" cy="4" r="3" fill="#fff"/><path d="M1.6,6 A3.1,3.1 0 0 1 6.2,1.7" stroke="#4a4a4a" stroke-width="1.2" fill="none"/><path d="M6.2,1.7 A3.1,3.1 0 0 1 1.6,6" stroke="#e4e4e4" stroke-width="0.8" fill="none"/><circle cx="4" cy="4" r="1.3" fill="#000"/></svg>
<span class="t" style="left:615.00px;top:109px;font-size:5.70px;line-height:12px;font-weight:bold;color:#000;transform:scaleX(0.9344);">RISULTATI TERMICI</span>
<svg style="left:603.00px;top:121.00px" width="8" height="8" viewBox="0 0 8 8"><circle cx="4" cy="4" r="3" fill="#fff"/><path d="M1.6,6 A3.1,3.1 0 0 1 6.2,1.7" stroke="#4a4a4a" stroke-width="1.2" fill="none"/><path d="M6.2,1.7 A3.1,3.1 0 0 1 1.6,6" stroke="#e4e4e4" stroke-width="0.8" fill="none"/></svg>
<span class="t" style="left:615.00px;top:119px;font-size:5.70px;line-height:12px;font-weight:bold;color:#000;transform:scaleX(0.9426);">RISULTATI MECCANICI</span>
<div class="b" style="left:692.50px;top:43.50px;width:144.50px;height:90.00px;background:#fffcc4;"></div>
<div class="b" style="left:694.00px;top:49.50px;width:141.50px;height:82.80px;border:1px solid #dcd9b4;border-radius:1.5px;"></div>
<div class="b" style="left:698.00px;top:46.00px;width:45.50px;height:8.00px;background:#fffcc4;"></div>
<span class="t" style="left:700.00px;top:45px;font-size:7.20px;line-height:12px;font-weight:bold;color:#000;transform:scaleX(0.9670);-webkit-text-stroke:0.25px #000;">VISUALIZZA</span>
<div class="b" style="left:700.30px;top:57.90px;width:7.40px;height:7.40px;background:#fff;border-top:1px solid #6a6a6a;border-left:1px solid #6a6a6a;border-bottom:1px solid #e8e8e8;border-right:1px solid #e8e8e8;"></div>
<svg style="left:700.30px;top:57.90px" width="8" height="8" viewBox="0 0 8 8"><path d="M1.6,3.6 L3.2,5.4 L6.3,1.9" stroke="#000" stroke-width="1.5" fill="none"/></svg>
<span class="t" style="left:712.00px;top:56px;font-size:5.70px;line-height:12px;font-weight:bold;color:#000;transform:scaleX(0.8540);">ESPOSIZIONE</span>
<div class="b" style="left:700.30px;top:68.90px;width:7.40px;height:7.40px;background:#fff;border-top:1px solid #6a6a6a;border-left:1px solid #6a6a6a;border-bottom:1px solid #e8e8e8;border-right:1px solid #e8e8e8;"></div>
<svg style="left:700.30px;top:68.90px" width="8" height="8" viewBox="0 0 8 8"><path d="M1.6,3.6 L3.2,5.4 L6.3,1.9" stroke="#000" stroke-width="1.5" fill="none"/></svg>
<span class="t" style="left:712.00px;top:67px;font-size:5.70px;line-height:12px;font-weight:bold;color:#000;transform:scaleX(0.9579);">MAPPA TERMICA</span>
<div class="b" style="left:700.30px;top:79.10px;width:7.40px;height:7.40px;background:#fff;border-top:1px solid #6a6a6a;border-left:1px solid #6a6a6a;border-bottom:1px solid #e8e8e8;border-right:1px solid #e8e8e8;"></div>
<span class="t" style="left:712.00px;top:77px;font-size:5.70px;line-height:12px;font-weight:bold;color:#000;transform:scaleX(0.9331);">TEMP. FERRI</span>
<div class="b" style="left:700.30px;top:88.90px;width:7.40px;height:7.40px;background:#fff;border-top:1px solid #6a6a6a;border-left:1px solid #6a6a6a;border-bottom:1px solid #e8e8e8;border-right:1px solid #e8e8e8;"></div>
<span class="t" style="left:712.00px;top:87px;font-size:5.70px;line-height:12px;font-weight:bold;color:#000;transform:scaleX(0.9050);">TEMP .NODI</span>
<div class="b" style="left:700.30px;top:98.90px;width:7.40px;height:7.40px;background:#fff;border-top:1px solid #6a6a6a;border-left:1px solid #6a6a6a;border-bottom:1px solid #e8e8e8;border-right:1px solid #e8e8e8;"></div>
<span class="t" style="left:712.00px;top:97px;font-size:5.70px;line-height:12px;font-weight:bold;color:#000;transform:scaleX(0.9241);">TEMP. INTERNE</span>
<div class="b" style="left:700.30px;top:108.70px;width:7.40px;height:7.40px;background:#ebebeb;border-top:1px solid #6a6a6a;border-left:1px solid #6a6a6a;border-bottom:1px solid #e8e8e8;border-right:1px solid #e8e8e8;"></div>
<span class="t" style="left:712.00px;top:107px;font-size:5.70px;line-height:12px;font-weight:bold;color:#b4b4a0;transform:scaleX(0.9022);">INFO TEMPO</span>
<div class="b" style="left:700.30px;top:118.60px;width:7.40px;height:7.40px;background:#fff;border-top:1px solid #6a6a6a;border-left:1px solid #6a6a6a;border-bottom:1px solid #e8e8e8;border-right:1px solid #e8e8e8;"></div>
<svg style="left:700.30px;top:118.60px" width="8" height="8" viewBox="0 0 8 8"><path d="M1.6,3.6 L3.2,5.4 L6.3,1.9" stroke="#000" stroke-width="1.5" fill="none"/></svg>
<span class="t" style="left:712.00px;top:116px;font-size:5.70px;line-height:12px;font-weight:bold;color:#000;transform:scaleX(0.9108);">MESH</span>
<div class="b" style="left:767.00px;top:57.90px;width:7.40px;height:7.40px;background:#fff;border-top:1px solid #6a6a6a;border-left:1px solid #6a6a6a;border-bottom:1px solid #e8e8e8;border-right:1px solid #e8e8e8;"></div>
<svg style="left:767.00px;top:57.90px" width="8" height="8" viewBox="0 0 8 8"><path d="M1.6,3.6 L3.2,5.4 L6.3,1.9" stroke="#000" stroke-width="1.5" fill="none"/></svg>
<span class="t" style="left:778.00px;top:56px;font-size:5.70px;line-height:12px;font-weight:bold;color:#000;transform:scaleX(0.9070);">ISOTERME</span>
<div class="b" style="left:767.00px;top:68.90px;width:7.40px;height:7.40px;background:#fff;border-top:1px solid #6a6a6a;border-left:1px solid #6a6a6a;border-bottom:1px solid #e8e8e8;border-right:1px solid #e8e8e8;"></div>
<span class="t" style="left:778.00px;top:67px;font-size:5.70px;line-height:12px;font-weight:bold;color:#000;transform:scaleX(0.9442);">NOMI NODI</span>
<div class="b" style="left:767.00px;top:79.10px;width:7.40px;height:7.40px;background:#fff;border-top:1px solid #6a6a6a;border-left:1px solid #6a6a6a;border-bottom:1px solid #e8e8e8;border-right:1px solid #e8e8e8;"></div>
<span class="t" style="left:778.00px;top:77px;font-size:5.70px;line-height:12px;font-weight:bold;color:#000;transform:scaleX(0.9275);">NOMI ELEMENTI</span>
<div class="b" style="left:767.00px;top:88.90px;width:7.40px;height:7.40px;background:#fff;border-top:1px solid #6a6a6a;border-left:1px solid #6a6a6a;border-bottom:1px solid #e8e8e8;border-right:1px solid #e8e8e8;"></div>
<svg style="left:767.00px;top:88.90px" width="8" height="8" viewBox="0 0 8 8"><path d="M1.6,3.6 L3.2,5.4 L6.3,1.9" stroke="#000" stroke-width="1.5" fill="none"/></svg>
<span class="t" style="left:778.00px;top:87px;font-size:5.70px;line-height:12px;font-weight:bold;color:#000;transform:scaleX(0.9433);">MINICAD</span>
<div class="b" style="left:767.00px;top:98.90px;width:7.40px;height:7.40px;background:#fff;border-top:1px solid #6a6a6a;border-left:1px solid #6a6a6a;border-bottom:1px solid #e8e8e8;border-right:1px solid #e8e8e8;"></div>
<svg style="left:767.00px;top:98.90px" width="8" height="8" viewBox="0 0 8 8"><path d="M1.6,3.6 L3.2,5.4 L6.3,1.9" stroke="#000" stroke-width="1.5" fill="none"/></svg>
<span class="t" style="left:778.00px;top:97px;font-size:5.70px;line-height:12px;font-weight:bold;color:#b4b4a0;transform:scaleX(0.8901);">INFO SEZIONE</span>
<div class="b" style="left:767.00px;top:108.70px;width:7.40px;height:7.40px;background:#ebebeb;border-top:1px solid #6a6a6a;border-left:1px solid #6a6a6a;border-bottom:1px solid #e8e8e8;border-right:1px solid #e8e8e8;"></div>
<span class="t" style="left:778.00px;top:107px;font-size:5.70px;line-height:12px;font-weight:bold;color:#b4b4a0;transform:scaleX(0.8667);">COPR. INT.</span>
<div class="b" style="left:767.00px;top:118.60px;width:7.40px;height:7.40px;background:#ebebeb;border-top:1px solid #6a6a6a;border-left:1px solid #6a6a6a;border-bottom:1px solid #e8e8e8;border-right:1px solid #e8e8e8;"></div>
<span class="t" style="left:778.00px;top:116px;font-size:5.70px;line-height:12px;font-weight:bold;color:#b4b4a0;transform:scaleX(0.8308);">COPR.EST.</span>
<svg style="left:767px;top:98.9px" width="8" height="8" viewBox="0 0 8 8"><rect x="1" y="1" width="6" height="6" fill="#fff"/><path d="M1.6,3.6 L3.2,5.4 L6.3,1.9" stroke="#a0a0a0" stroke-width="1.4" fill="none"/></svg>
<div class="b" style="left:776.60px;top:57.30px;width:29.70px;height:8.90px;border:1px dotted #555;"></div>
<div class="b" style="left:810.00px;top:109.00px;width:15.60px;height:13.50px;background:#fff;border-top:1px solid #6e6e6e;border-left:1px solid #6e6e6e;border-bottom:1px solid #e6e6e6;border-right:1px solid #e6e6e6;"></div>
<span class="t" style="left:812.20px;top:110px;font-size:8.40px;line-height:12px;color:#000;transform:scaleX(0.8562);">3</span>
<div class="b" style="left:598.50px;top:135.50px;width:238.50px;height:47.30px;background:#c4fbfb;"></div>
<div class="b" style="left:600.00px;top:139.10px;width:235.50px;height:42.50px;border:1px solid #b7e2e2;border-radius:1.5px;"></div>
<div class="b" style="left:602.00px;top:135.60px;width:39.50px;height:8.00px;background:#c4fbfb;"></div>
<span class="t" style="left:604.00px;top:134px;font-size:7.20px;line-height:12px;font-weight:bold;color:#000;transform:scaleX(0.9868);-webkit-text-stroke:0.25px #000;">PANNELLI</span>
<div class="b" style="left:605.00px;top:146.60px;width:7.40px;height:7.40px;background:#fff;border-top:1px solid #6a6a6a;border-left:1px solid #6a6a6a;border-bottom:1px solid #e8e8e8;border-right:1px solid #e8e8e8;"></div>
<svg style="left:605.00px;top:146.60px" width="8" height="8" viewBox="0 0 8 8"><path d="M1.6,3.6 L3.2,5.4 L6.3,1.9" stroke="#000" stroke-width="1.5" fill="none"/></svg>
<span class="t" style="left:617.00px;top:144px;font-size:5.70px;line-height:12px;font-weight:bold;color:#000;transform:scaleX(0.8626);">CALCOLO T.</span>
<div class="b" style="left:605.00px;top:158.40px;width:7.40px;height:7.40px;background:#fff;border-top:1px solid #6a6a6a;border-left:1px solid #6a6a6a;border-bottom:1px solid #e8e8e8;border-right:1px solid #e8e8e8;"></div>
<span class="t" style="left:617.00px;top:156px;font-size:5.70px;line-height:12px;font-weight:bold;color:#000;transform:scaleX(0.8097);">SOLLEC.</span>
<div class="b" style="left:605.00px;top:170.20px;width:7.40px;height:7.40px;background:#fff;border-top:1px solid #6a6a6a;border-left:1px solid #6a6a6a;border-bottom:1px solid #e8e8e8;border-right:1px solid #e8e8e8;"></div>
<span class="t" style="left:617.00px;top:168px;font-size:5.70px;line-height:12px;font-weight:bold;color:#000;transform:scaleX(0.8560);">INFO RIS.</span>
<div class="b" style="left:656.30px;top:146.60px;width:7.40px;height:7.40px;background:#fff;border-top:1px solid #6a6a6a;border-left:1px solid #6a6a6a;border-bottom:1px solid #e8e8e8;border-right:1px solid #e8e8e8;"></div>
<span class="t" style="left:667.50px;top:144px;font-size:5.70px;line-height:12px;font-weight:bold;color:#000;transform:scaleX(0.8393);">TIPI DI ESP.</span>
<div class="b" style="left:656.30px;top:158.40px;width:7.40px;height:7.40px;background:#fff;border-top:1px solid #6a6a6a;border-left:1px solid #6a6a6a;border-bottom:1px solid #e8e8e8;border-right:1px solid #e8e8e8;"></div>
<span class="t" style="left:667.50px;top:156px;font-size:5.70px;line-height:12px;font-weight:bold;color:#000;transform:scaleX(0.9041);">OPZ RIS MEC</span>
<div class="b" style="left:656.30px;top:170.20px;width:7.40px;height:7.40px;background:#fff;border-top:1px solid #6a6a6a;border-left:1px solid #6a6a6a;border-bottom:1px solid #e8e8e8;border-right:1px solid #e8e8e8;"></div>
<span class="t" style="left:667.50px;top:168px;font-size:5.70px;line-height:12px;font-weight:bold;color:#000;transform:scaleX(0.8867);">SERVIZIO</span>
<div class="b" style="left:703.80px;top:146.60px;width:7.40px;height:7.40px;background:#fff;border-top:1px solid #6a6a6a;border-left:1px solid #6a6a6a;border-bottom:1px solid #e8e8e8;border-right:1px solid #e8e8e8;"></div>
<svg style="left:703.80px;top:146.60px" width="8" height="8" viewBox="0 0 8 8"><path d="M1.6,3.6 L3.2,5.4 L6.3,1.9" stroke="#000" stroke-width="1.5" fill="none"/></svg>
<span class="t" style="left:715.00px;top:144px;font-size:5.70px;line-height:12px;font-weight:bold;color:#000;transform:scaleX(0.9806);">MT-TEMPO</span>
<span class="t" style="left:757.00px;top:145px;font-size:7.60px;line-height:12px;color:#000;transform:scaleX(0.8723);">Nro el.finiti :</span>
<span class="t" style="left:757.00px;top:160px;font-size:7.60px;line-height:12px;color:#000;transform:scaleX(0.8651);">Nro tempi</span>
<span class="t" style="left:757.00px;top:169px;font-size:7.60px;line-height:12px;color:#000;transform:scaleX(0.8520);">memorizzati :</span>
<div class="b" style="left:808.00px;top:145.00px;width:15.50px;height:10.80px;background:#fff;border-top:1px solid #6e6e6e;border-left:1px solid #6e6e6e;border-bottom:1px solid #e6e6e6;border-right:1px solid #e6e6e6;"></div>
<span class="t" style="left:810.30px;top:145px;font-size:8.40px;line-height:12px;color:#000;transform:scaleX(0.8348);">740</span>
<div class="b" style="left:808.00px;top:163.80px;width:15.50px;height:11.40px;background:#f0edf0;border-top:1px solid #6e6e6e;border-left:1px solid #6e6e6e;border-bottom:1px solid #e6e6e6;border-right:1px solid #e6e6e6;"></div>
<span class="t" style="left:810.30px;top:164px;font-size:8.40px;line-height:12px;color:#000;transform:scaleX(0.8562);">5</span>
<div class="b" style="left:598.50px;top:182.80px;width:237.50px;height:4.70px;background:#f3f1fa;"></div>
<div class="b" style="left:598.50px;top:190.50px;width:238.50px;height:59.00px;background:#ffb870;"></div>
<div class="b" style="left:600.00px;top:193.30px;width:235.50px;height:55.00px;border:1px solid #e8b083;border-radius:1.5px;"></div>
<div class="b" style="left:602.40px;top:189.80px;width:73.30px;height:8.00px;background:#ffb870;"></div>
<span class="t" style="left:604.40px;top:188px;font-size:7.20px;line-height:12px;font-weight:bold;color:#000;transform:scaleX(0.9718);-webkit-text-stroke:0.25px #000;">CALCOLO TERMICO</span>
<div class="b" style="left:598.50px;top:187.30px;width:238.50px;height:6.10px;background:linear-gradient(#fbe0c6,#fbd3ad 55%,rgba(255,184,112,0));"></div>
<span class="t" style="left:604.40px;top:188px;font-size:7.20px;line-height:12px;font-weight:bold;color:#000;transform:scaleX(0.9718);-webkit-text-stroke:0.25px #000;">CALCOLO TERMICO</span>
<div class="b" style="left:604.00px;top:202.50px;width:49.30px;height:13.70px;background:#f4f4f4;border-top:1px solid #fff;border-left:1px solid #fff;border-bottom:1px solid #6c6c6c;border-right:1px solid #6c6c6c;"></div>
<span class="t" style="left:608.50px;top:204px;font-size:7.60px;line-height:12px;color:#000;transform:scaleX(0.9013);">Genera mesh</span>
<div class="b" style="left:604.00px;top:218.00px;width:49.30px;height:14.00px;background:#f4f4f4;border-top:1px solid #fff;border-left:1px solid #fff;border-bottom:1px solid #6c6c6c;border-right:1px solid #6c6c6c;"></div>
<span class="t" style="left:619.50px;top:220px;font-size:7.60px;line-height:12px;color:#000;transform:scaleX(0.9516);">Brucia</span>
<div class="b" style="left:606.00px;top:237.60px;width:7.40px;height:7.40px;background:#fff;border-top:1px solid #6a6a6a;border-left:1px solid #6a6a6a;border-bottom:1px solid #e8e8e8;border-right:1px solid #e8e8e8;"></div>
<span class="t" style="left:617.00px;top:235px;font-size:5.70px;line-height:12px;font-weight:bold;color:#000;transform:scaleX(0.9018);">CHECK DATABASE</span>
<span class="t" style="left:658.00px;top:203px;font-size:7.60px;line-height:12px;color:#000;transform:scaleX(0.9043);">Mappe ogni (min) :</span>
<span class="t" style="left:658.00px;top:219px;font-size:7.60px;line-height:12px;color:#000;transform:scaleX(0.9010);">Numero mappe :</span>
<div class="b" style="left:717.50px;top:202.50px;width:21.30px;height:11.30px;background:#fff;border-top:1px solid #6e6e6e;border-left:1px solid #6e6e6e;border-bottom:1px solid #e6e6e6;border-right:1px solid #e6e6e6;"></div>
<span class="t" style="left:720.00px;top:202px;font-size:8.40px;line-height:12px;color:#000;transform:scaleX(0.8562);">15</span>
<div class="b" style="left:717.50px;top:218.00px;width:21.30px;height:11.40px;background:#fff;border-top:1px solid #6e6e6e;border-left:1px solid #6e6e6e;border-bottom:1px solid #e6e6e6;border-right:1px solid #e6e6e6;"></div>
<span class="t" style="left:720.00px;top:218px;font-size:8.40px;line-height:12px;color:#000;transform:scaleX(0.8562);">4</span>
<span class="t" style="left:747.50px;top:203px;font-size:7.60px;line-height:12px;color:#000;transform:scaleX(0.9108);">Dt calc.:</span>
<span class="t" style="left:747.50px;top:219px;font-size:7.60px;line-height:12px;color:#000;transform:scaleX(0.8705);">Dt trian.:</span>
<div class="b" style="left:775.00px;top:202.50px;width:7.60px;height:11.00px;background:#f4f4f4;border-top:1px solid #fff;border-left:1px solid #fff;border-bottom:1px solid #6c6c6c;border-right:1px solid #6c6c6c;"></div>
<span class="t" style="left:777.60px;top:202px;font-size:7.60px;line-height:12px;font-weight:bold;color:#000;transform:scaleX(0.9482);">-</span>
<div class="b" style="left:784.00px;top:202.50px;width:17.00px;height:11.20px;background:#fff;border-top:1px solid #6e6e6e;border-left:1px solid #6e6e6e;border-bottom:1px solid #e6e6e6;border-right:1px solid #e6e6e6;"></div>
<div class="b" style="left:802.50px;top:202.50px;width:8.20px;height:11.00px;background:#f4f4f4;border-top:1px solid #fff;border-left:1px solid #fff;border-bottom:1px solid #6c6c6c;border-right:1px solid #6c6c6c;"></div>
<span class="t" style="left:804.40px;top:203px;font-size:6.50px;line-height:12px;font-weight:bold;color:#000;transform:scaleX(1.1591);">+</span>
<div class="b" style="left:775.00px;top:218.00px;width:7.60px;height:11.00px;background:#f4f4f4;border-top:1px solid #fff;border-left:1px solid #fff;border-bottom:1px solid #6c6c6c;border-right:1px solid #6c6c6c;"></div>
<span class="t" style="left:777.60px;top:218px;font-size:7.60px;line-height:12px;font-weight:bold;color:#000;transform:scaleX(0.9482);">-</span>
<div class="b" style="left:784.00px;top:218.00px;width:17.00px;height:11.20px;background:#fff;border-top:1px solid #6e6e6e;border-left:1px solid #6e6e6e;border-bottom:1px solid #e6e6e6;border-right:1px solid #e6e6e6;"></div>
<div class="b" style="left:802.50px;top:218.00px;width:8.20px;height:11.00px;background:#f4f4f4;border-top:1px solid #fff;border-left:1px solid #fff;border-bottom:1px solid #6c6c6c;border-right:1px solid #6c6c6c;"></div>
<span class="t" style="left:804.40px;top:219px;font-size:6.50px;line-height:12px;font-weight:bold;color:#000;transform:scaleX(1.1591);">+</span>
<span class="t" style="left:786.30px;top:202px;font-size:8.40px;line-height:12px;color:#000;transform:scaleX(0.8455);">10</span>
<span class="t" style="left:786.30px;top:218px;font-size:8.40px;line-height:12px;color:#000;transform:scaleX(0.8562);">100</span>
<div class="b" style="left:813.00px;top:210.00px;width:9.60px;height:11.20px;background:#f4f4f4;border-top:1px solid #fff;border-left:1px solid #fff;border-bottom:1px solid #6c6c6c;border-right:1px solid #6c6c6c;"></div>
<span class="t" style="left:815.20px;top:208px;font-size:9.00px;line-height:16px;color:#2a3a8c;transform:scaleX(1.0274);">&lt;</span>
<div class="b" style="left:792.00px;top:236.00px;width:15.20px;height:9.80px;background:#f4f4f4;border-top:1px solid #fff;border-left:1px solid #fff;border-bottom:1px solid #6c6c6c;border-right:1px solid #6c6c6c;"></div>
<span class="t" style="left:797.00px;top:236px;font-size:7.40px;line-height:12px;font-weight:bold;color:#000;transform:scaleX(0.9730);">R</span>
<div class="b" style="left:827.50px;top:195.40px;width:9.40px;height:5.60px;background:#ececec;border-top:1px solid #fff;border-left:1px solid #fff;border-bottom:1px solid #6c6c6c;border-right:1px solid #6c6c6c;"></div>
<svg style="left:829.20px;top:196.20px" width="6" height="4" viewBox="0 0 6 4"><path d="M0.4,3.5 H5.6 L3,0.5 Z" fill="#000"/></svg>
<div class="b" style="left:598.50px;top:250.50px;width:238.50px;height:50.50px;background:#f0f0f0;"></div>
<div class="b" style="left:600.00px;top:256.30px;width:235.50px;height:43.50px;border:1px solid #c9c9c9;border-radius:1.5px;"></div>
<div class="b" style="left:601.80px;top:252.80px;width:104.50px;height:8.00px;background:#f0f0f0;"></div>
<span class="t" style="left:603.80px;top:251px;font-size:7.20px;line-height:12px;font-weight:bold;color:#000;transform:scaleX(1.0287);-webkit-text-stroke:0.25px #000;">MAPPE TERMICHE - TEMPO</span>
<div class="b" style="left:606.00px;top:262.50px;width:125.30px;height:22.10px;border:1px solid #8a8a8a;background:#f0f0f0;"></div>
<svg width="840" height="625" viewBox="0 0 840 625"><path d="M612.5,270 H718" stroke="#8c8c8c" stroke-width="1.2"/><path d="M612.5,271 H718" stroke="#fff" stroke-width="0.6"/><rect x="615.1" y="279.4" width="1.1" height="1.6" fill="#4a4a4a"/><rect x="642" y="279.4" width="1.1" height="1.6" fill="#4a4a4a"/><rect x="668.5" y="279.4" width="1.1" height="1.6" fill="#4a4a4a"/><rect x="695.3" y="279.4" width="1.1" height="1.6" fill="#4a4a4a"/><rect x="722" y="279.4" width="1.1" height="1.6" fill="#4a4a4a"/><path d="M725.8,264.3 V273.8 L722.7,278.2" stroke="#5a5a5a" stroke-width="1.1" fill="none"/></svg>
<span class="t" style="left:612.60px;top:285px;font-size:7.60px;line-height:12px;font-weight:bold;color:#16167c;transform:scaleX(1.1829);">0</span>
<span class="t" style="left:718.00px;top:285px;font-size:7.60px;line-height:12px;font-weight:bold;color:#16167c;transform:scaleX(1.1356);">60</span>
<span class="t" style="left:733.00px;top:285px;font-size:7.60px;line-height:12px;font-weight:bold;color:#16167c;transform:scaleX(0.9770);">min</span>
<span class="t" style="left:748.00px;top:263px;font-size:7.60px;line-height:12px;color:#000;transform:scaleX(0.9182);">Tempo [sec.]:</span>
<span class="t" style="left:797.50px;top:263px;font-size:7.60px;line-height:12px;color:#000;transform:scaleX(0.9641);">3600</span>
<div class="b" style="left:766.00px;top:280.00px;width:48.00px;height:12.80px;background:#f2f2f2;border-top:1px solid #fff;border-left:1px solid #fff;border-bottom:1px solid #666;border-right:1px solid #666;"></div>
<span class="t" style="left:774.50px;top:281px;font-size:7.60px;line-height:12px;color:#a8a8a8;transform:scaleX(0.8915);">Interrompi</span>
<div class="b" style="left:828.00px;top:258.60px;width:9.40px;height:5.60px;background:#ececec;border-top:1px solid #fff;border-left:1px solid #fff;border-bottom:1px solid #6c6c6c;border-right:1px solid #6c6c6c;"></div>
<svg style="left:829.70px;top:259.40px" width="6" height="4" viewBox="0 0 6 4"><path d="M0.4,3.5 H5.6 L3,0.5 Z" fill="#000"/></svg>
</body></html>
